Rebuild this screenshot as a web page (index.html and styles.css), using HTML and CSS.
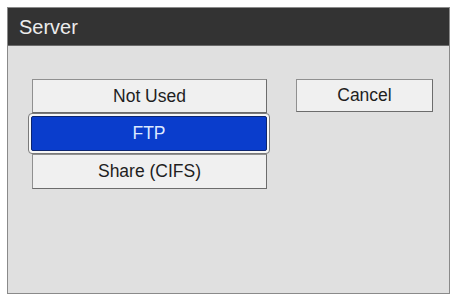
FILE: index.html
```html
<!DOCTYPE html>
<html lang="en">
<head>
    <meta charset="UTF-8">
    <title>Server</title>
    <link rel="stylesheet" href="styles.css">
</head>
<body>
    <div class="window">
        <div class="title-bar">Server</div>
        <div class="content">
            <div class="option-list">
                <div class="option">Not Used</div>
                <div class="option selected"><span>FTP</span></div>
                <div class="option">Share (CIFS)</div>
            </div>
            <div class="option cancel">Cancel</div>
        </div>
    </div>
</body>
</html>
```

FILE: styles.css
```css
* {
    margin: 0;
    padding: 0;
    box-sizing: border-box;
    font-family: 'Liberation Sans', Arial, sans-serif;
}

body {
    background-color: #ffffff;
    padding: 7px 0 0 7px;
}

.window {
    width: 443px;
    height: 287px;
    border: 1px solid #8a8a8a;
    background-color: #e0e0e0;
    display: flex;
    flex-direction: column;
}

.title-bar {
    height: 38px;
    background-color: #333333;
    border-bottom: 1px solid #6a6a6a;
    color: #ececec;
    font-size: 20px;
    padding: 8px 0 0 11px;
}

.content {
    flex: 1;
    display: flex;
    align-items: flex-start;
    gap: 29px;
    padding: 33px 0 0 24px;
}

.option-list {
    width: 235px;
    display: flex;
    flex-direction: column;
}

.option {
    height: 34px;
    border: 1px solid #6c6c6c;
    border-top-color: #909090;
    border-left-color: #909090;
    background-color: #f0f0f0;
    color: #1e1e1e;
    font-size: 17.5px;
    display: flex;
    align-items: center;
    justify-content: center;
}

.option-list .option:last-child {
    height: 35px;
}

.option.selected {
    height: 41px;
    margin: 0 -3px 0 -4px;
    border: 1px solid #7a7a7a;
    border-radius: 4px;
    background-color: #f7f7f7;
    padding: 2px;
}

.option.selected span {
    flex: 1;
    height: 100%;
    background-color: #0a3dcc;
    border: 1px solid #0c2570;
    border-radius: 2px;
    color: #dce9ff;
    display: flex;
    align-items: center;
    justify-content: center;
}

.cancel {
    width: 137px;
    height: 33px;
}
```
